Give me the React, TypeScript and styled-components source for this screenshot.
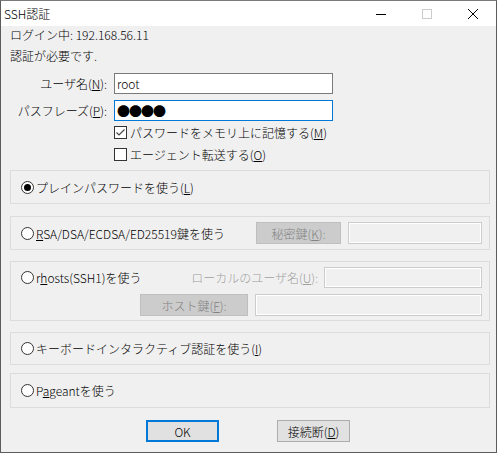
import React from 'react';
import styled, { createGlobalStyle } from 'styled-components';

const GlobalStyle = createGlobalStyle`
	html, body {
		margin: 0;
		padding: 0;
		background: #ffffff;
	}
	* {
		box-sizing: border-box;
	}
`;

const Window = styled.div`
	width: 497px;
	height: 453px;
	border: 1px solid #5c5c5c;
	border-top-color: #7a7a7a;
	background: #f0f0f0;
	display: flex;
	flex-direction: column;
	font-family: 'Noto Sans CJK JP', 'Noto Sans', sans-serif;
	font-size: 12px;
	font-weight: 300;
	color: #000;
`;

const TitleBar = styled.div`
	height: 25px;
	background: #ffffff;
	display: flex;
	align-items: center;
`;

const Title = styled.div`
	padding-left: 3px;
	flex: 1;
	line-height: 25px;
`;

const CaptionButton = styled.div`
	width: 46px;
	height: 25px;
	display: flex;
	align-items: center;
	justify-content: center;
`;

const Body = styled.div`
	padding: 0 6px 0 9px;
	display: flex;
	flex-direction: column;
`;

const InfoLine = styled.div<{ $top: number }>`
	height: 16px;
	line-height: 16px;
	margin-top: ${(p) => p.$top}px;
	padding-left: 0;
`;

const FieldRow = styled.div<{ $top: number }>`
	display: flex;
	align-items: center;
	margin-top: ${(p) => p.$top}px;
`;

const FieldLabel = styled.div`
	width: 97px;
	text-align: right;
	margin-right: 7px;
	white-space: nowrap;
`;

const TextBox = styled.input<{ $focused?: boolean; $dots?: boolean }>`
	width: 219px;
	height: 21px;
	border: 1px solid ${(p) => (p.$focused ? '#0078d7' : '#7a7a7a')};
	background: #fff;
	padding: 0 2px;
	font-family: inherit;
	font-weight: inherit;
	font-size: ${(p) => (p.$dots ? '13px' : '12px')};
	letter-spacing: ${(p) => (p.$dots ? '-1px' : '0')};
	outline: none;
	color: #000;
`;

const CheckRow = styled.div`
	height: 22px;
	display: flex;
	align-items: center;
	margin-left: 104px;
	gap: 3px;
`;

const CheckBox = styled.span`
	width: 13px;
	height: 13px;
	border: 1px solid #333;
	background: #fff;
	display: inline-flex;
	align-items: center;
	justify-content: center;
`;

const Group = styled.div<{ $top: number; $height: number }>`
	width: 480px;
	height: ${(p) => p.$height}px;
	margin-top: ${(p) => p.$top}px;
	border: 1px solid #dcdcdc;
	padding: 0 7px 0 10px;
	display: flex;
	align-items: center;
`;

const StackGroup = styled(Group)`
	flex-direction: column;
	align-items: stretch;
	justify-content: flex-start;
	padding-top: 5px;
	gap: 6px;
`;

const GroupRow = styled.div<{ $end?: boolean }>`
	display: flex;
	align-items: center;
	justify-content: ${(p) => (p.$end ? 'flex-end' : 'flex-start')};
`;

const RadioLabel = styled.label`
	display: flex;
	align-items: center;
	gap: 2px;
	white-space: nowrap;
`;

const RadioCircle = styled.span<{ $checked?: boolean }>`
	width: 13px;
	height: 13px;
	border-radius: 50%;
	border: 1px solid #333;
	background: #fff;
	display: inline-flex;
	align-items: center;
	justify-content: center;

	&::after {
		content: '';
		width: 7px;
		height: 7px;
		border-radius: 50%;
		background: ${(p) => (p.$checked ? '#000' : 'transparent')};
	}
`;

const Spacer = styled.div`
	flex: 1;
`;

const DisabledButton = styled.div<{ $width: number }>`
	width: ${(p) => p.$width}px;
	height: 22px;
	background: #cccccc;
	border: 1px solid #bfbfbf;
	color: #838383;
	display: flex;
	align-items: center;
	justify-content: center;
	margin-right: 7px;
`;

const DisabledField = styled.div<{ $width: number; $height: number }>`
	width: ${(p) => p.$width}px;
	height: ${(p) => p.$height}px;
	border: 1px solid #cccccc;
	box-shadow: inset 0 0 0 1px #ffffff;
	background: #f0f0f0;
`;

const DisabledText = styled.div`
	color: #a0a0a0;
	margin-right: 6px;
	white-space: nowrap;
`;

const ButtonRow = styled.div`
	display: flex;
	justify-content: center;
	gap: 58px;
	margin-top: 12px;
	padding-right: 4px;
`;

const PushButton = styled.div<{ $default?: boolean }>`
	width: 73px;
	height: 22px;
	background: #e1e1e1;
	border: ${(p) => (p.$default ? '2px solid #0078d7' : '1px solid #adadad')};
	display: flex;
	align-items: center;
	justify-content: center;
`;

const U = styled.span`
	text-decoration: underline;
	text-underline-offset: 1px;
`;

const Radio: React.FC<{ checked?: boolean; children: React.ReactNode }> = ({ checked, children }) => (
	<RadioLabel>
		<RadioCircle $checked={checked} />
		<span>{children}</span>
	</RadioLabel>
);

export default function App() {
	return (
		<>
			<GlobalStyle />
			<Window>
				<TitleBar>
					<Title>SSH認証</Title>
					<CaptionButton>
						<svg width="10" height="10" viewBox="0 0 10 10">
							<line x1="0" y1="5.5" x2="10" y2="5.5" stroke="#000" strokeWidth="1" />
						</svg>
					</CaptionButton>
					<CaptionButton>
						<svg width="10" height="10" viewBox="0 0 10 10">
							<rect x="0.5" y="0.5" width="9" height="9" fill="none" stroke="#cccccc" strokeWidth="1" />
						</svg>
					</CaptionButton>
					<CaptionButton>
						<svg width="10" height="10" viewBox="0 0 10 10">
							<path d="M0 0 L10 10 M10 0 L0 10" stroke="#000" strokeWidth="1" />
						</svg>
					</CaptionButton>
				</TitleBar>
				<Body>
					<InfoLine $top={1}>ログイン中: 192.168.56.11</InfoLine>
					<InfoLine $top={5}>認証が必要です.</InfoLine>

					<FieldRow $top={9}>
						<FieldLabel>
							ユーザ名(<U>N</U>):
						</FieldLabel>
						<TextBox readOnly value="root" />
					</FieldRow>
					<FieldRow $top={6}>
						<FieldLabel>
							パスフレーズ(<U>P</U>):
						</FieldLabel>
						<TextBox readOnly $focused $dots value="●●●●" />
					</FieldRow>

					<CheckRow>
						<CheckBox>
							<svg width="11" height="11" viewBox="0 0 11 11">
								<polyline points="1.5,5.5 4,8 9.5,2.5" fill="none" stroke="#444" strokeWidth="1.2" />
							</svg>
						</CheckBox>
						<span>
							パスワードをメモリ上に記憶する(<U>M</U>)
						</span>
					</CheckRow>
					<CheckRow>
						<CheckBox />
						<span>
							エージェント転送する(<U>O</U>)
						</span>
					</CheckRow>

					<Group $top={5} $height={34}>
						<Radio checked>
							プレインパスワードを使う(<U>L</U>)
						</Radio>
					</Group>

					<Group $top={12} $height={34}>
						<Radio>
							<U>R</U>SA/DSA/ECDSA/ED25519鍵を使う
						</Radio>
						<Spacer />
						<DisabledButton $width={85}>
							秘密鍵(<U>K</U>):
						</DisabledButton>
						<DisabledField $width={134} $height={22} />
					</Group>

					<StackGroup $top={11} $height={60}>
						<GroupRow>
							<Radio>
								r<U>h</U>osts(SSH1)を使う
							</Radio>
							<Spacer />
							<DisabledText>
								ローカルのユーザ名(<U>U</U>):
							</DisabledText>
							<DisabledField $width={158} $height={21} />
						</GroupRow>
						<GroupRow $end>
							<DisabledButton $width={108}>
								ホスト鍵(<U>F</U>):
							</DisabledButton>
							<DisabledField $width={227} $height={22} />
						</GroupRow>
					</StackGroup>

					<Group $top={11} $height={33}>
						<Radio>
							キーボードインタラクティブ認証を使う(<U>I</U>)
						</Radio>
					</Group>

					<Group $top={8} $height={35}>
						<Radio>
							P<U>a</U>geantを使う
						</Radio>
					</Group>

					<ButtonRow>
						<PushButton $default>OK</PushButton>
						<PushButton>
							接続断(<U>D</U>)
						</PushButton>
					</ButtonRow>
				</Body>
			</Window>
		</>
	);
}
